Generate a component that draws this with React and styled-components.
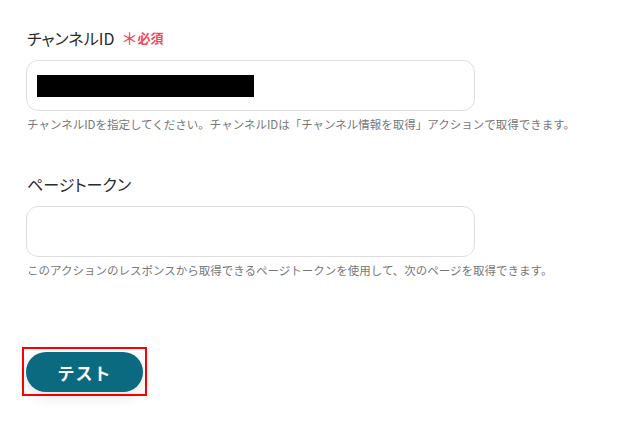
import React from "react";
import styled, { createGlobalStyle } from "styled-components";

const GlobalStyle = createGlobalStyle`
  body {
    margin: 0;
    background: #fff;
    font-family: "Noto Sans CJK JP", "Noto Sans", sans-serif;
  }
`;

const Page = styled.div`
  width: 623px;
  height: 426px;
  padding: 26px 0 0 26px;
  box-sizing: border-box;
  display: flex;
  flex-direction: column;
`;

const Field = styled.div`
  display: flex;
  flex-direction: column;
  margin-bottom: ${(p) => p.gap || 0}px;
`;

const Label = styled.label`
  display: flex;
  align-items: center;
  gap: 8px;
  font-size: 16px;
  font-weight: 400;
  font-feature-settings: "palt";
  line-height: 24px;
  color: #2b2b2b;
  padding-left: 1px;
  margin-bottom: 10px;
`;

const Required = styled.span`
  color: #f0475b;
  font-size: 13px;
  font-weight: 700;
  display: flex;
  align-items: center;
  gap: 1px;
`;

const Star = styled.span`
  font-size: 17px;
  font-weight: 400;
`;

const Input = styled.div`
  width: 449px;
  height: 51px;
  box-sizing: border-box;
  border: 1px solid #dedede;
  border-radius: 12px;
  display: flex;
  align-items: center;
  padding-left: 10px;
`;

const Redacted = styled.div`
  width: 217px;
  height: 22px;
  background: #000;
`;

const Help = styled.p`
  margin: 4px 0 0 1px;
  font-size: 11.5px;
  line-height: 18px;
  color: #777;
  white-space: nowrap;
`;

const Outline = styled.div`
  align-self: flex-start;
  margin-left: -4px;
  border: 2px solid #f00;
  padding: 3px 2px 2px 2px;
`;

const Button = styled.button`
  width: 117px;
  height: 40px;
  border: none;
  border-radius: 20px;
  background: #0b6a80;
  color: #fff;
  font-family: inherit;
  font-size: 17px;
  font-weight: 700;
  letter-spacing: 1px;
  box-shadow: 0 4px 14px rgba(0, 0, 0, 0.12);
  display: block;
`;

export default function App() {
  return (
    <>
      <GlobalStyle />
      <Page>
        <Field gap={39}>
          <Label>
            チャンネルID
            <Required>
              <Star>＊</Star>必須
            </Required>
          </Label>
          <Input>
            <Redacted />
          </Input>
          <Help>
            チャンネルIDを指定してください。チャンネルIDは「チャンネル情報を取得」アクションで取得できます。
          </Help>
        </Field>
        <Field gap={68}>
          <Label>ページトークン</Label>
          <Input />
          <Help>
            このアクションのレスポンスから取得できるページトークンを使用して、次のページを取得できます。
          </Help>
        </Field>
        <Outline>
          <Button>テスト</Button>
        </Outline>
      </Page>
    </>
  );
}
